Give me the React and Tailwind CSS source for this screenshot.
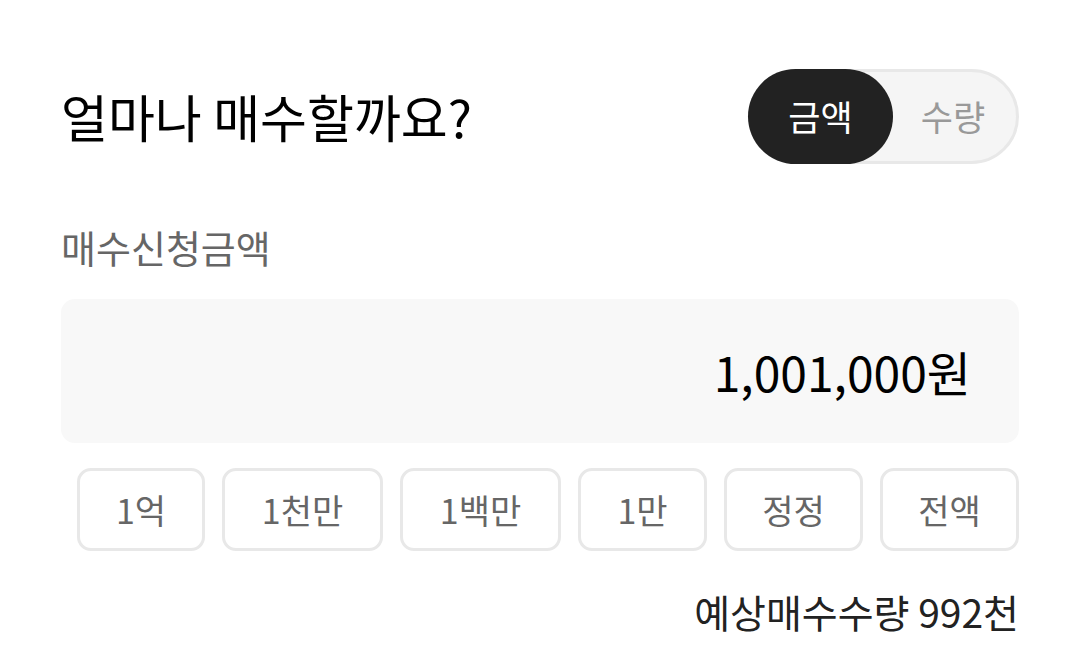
import { useState } from "react";

const amounts = [
    { label: "1억", w: "w-[128px]" },
    { label: "1천만", w: "w-[161px]" },
    { label: "1백만", w: "w-[161px]" },
    { label: "1만", w: "w-[129px]" },
    { label: "정정", w: "w-[139px]" },
    { label: "전액", w: "w-[139px]" },
];

export default function App() {
    // 금액 / 수량 토글
    const [mode, setMode] = useState("amount");

    return (
        <div
            className="w-[1080px] h-[661px] bg-white px-[61px] pt-[69px] flex flex-col"
            style={{ fontFamily: '"Noto Sans CJK KR", "Noto Sans", sans-serif' }}
        >
            {/* 제목 + 토글 */}
            <div className="flex items-center justify-between">
                <h1 className="text-[51px] leading-none text-black">얼마나 매수할까요?</h1>
                <div className="flex w-[271px] h-[95px] rounded-full bg-[#f5f5f5] border-[3px] border-[#e8e8e8]">
                    <button
                        className={`w-[145px] -m-[3px] h-[95px] rounded-full text-[35px] ${mode === "amount" ? "bg-[#222222] text-white" : "text-[#999999]"}`}
                        onClick={() => setMode("amount")}
                    >
                        금액
                    </button>
                    <button
                        className={`flex-1 -my-[3px] h-[95px] rounded-full text-[35px] ${mode === "count" ? "bg-[#222222] text-white" : "text-[#999999]"}`}
                        onClick={() => setMode("count")}
                    >
                        수량
                    </button>
                </div>
            </div>

            {/* 입력 라벨 */}
            <div className="mt-[64px] text-[38px] leading-none text-[#666666]">매수신청금액</div>

            {/* 금액 입력 */}
            <div className="mt-[33px] h-[144px] rounded-[14px] bg-[#f8f8f8] flex items-center justify-end pr-[48px]">
                <span className="text-[48px] text-black">1,001,000원</span>
            </div>

            {/* 빠른 금액 버튼 */}
            <div className="mt-[25px] flex justify-end gap-[17px]">
                {amounts.map((item) => (
                    <button
                        key={item.label}
                        className={`${item.w} h-[83px] rounded-[14px] border-[3px] border-[#e8e8e8] bg-white text-[34px] text-[#666666]`}
                    >
                        {item.label}
                    </button>
                ))}
            </div>

            {/* 예상 수량 */}
            <div className="mt-[41px] text-right text-[39px] leading-none text-[#222222]">
                예상매수수량 992천
            </div>
        </div>
    );
}
